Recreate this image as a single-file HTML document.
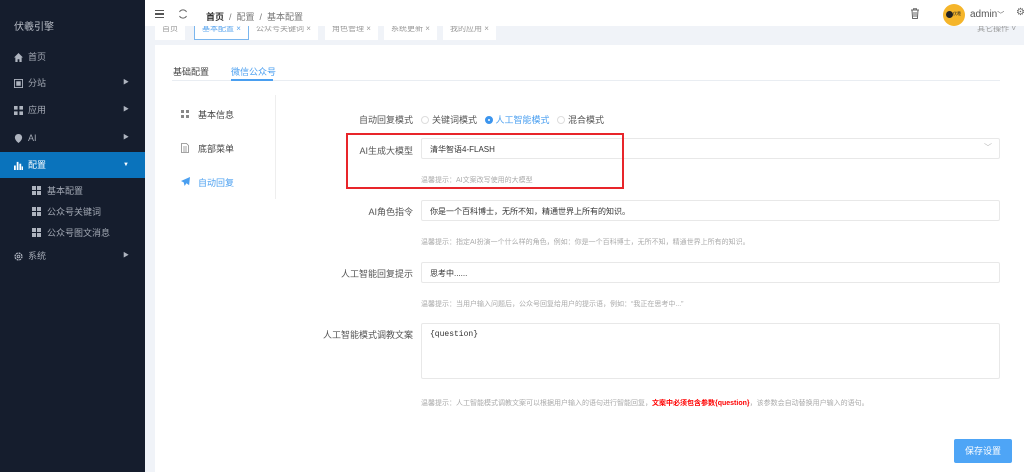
<!DOCTYPE html>
<html><head><meta charset="utf-8"><style>
*{margin:0;padding:0;box-sizing:border-box}
body{width:1024px;height:472px;overflow:hidden;position:relative;background:#fff;font-family:"Liberation Sans","Noto Sans CJK SC",sans-serif;font-size:9px;color:#555}
.abs{position:absolute}
.side{left:0;top:0;width:145px;height:472px;background:#151d2d}
.side .it{position:absolute;left:0;width:145px;height:26px;line-height:26px;color:#a4aab5;font-size:9px;padding-left:28px}
.side .ic{position:absolute;left:14px;top:9px;width:9px;height:9px}
.side .ar{position:absolute;right:16px;top:0;font-size:6px;color:#aeb4bf}
.sub{position:absolute;left:32px;color:#a4aab5;font-size:9px;padding-left:15px}
.sub:before{content:"";position:absolute;left:0;top:2px;width:9px;height:9px;background:
linear-gradient(#aeb4bf,#aeb4bf) 0 0/4px 4px no-repeat,linear-gradient(#aeb4bf,#aeb4bf) 5px 0/4px 4px no-repeat,linear-gradient(#aeb4bf,#aeb4bf) 0 5px/4px 4px no-repeat,linear-gradient(#aeb4bf,#aeb4bf) 5px 5px/4px 4px no-repeat}
.tabbar{left:145px;top:26px;width:879px;height:19px;background:#f0f3f8;overflow:hidden}
.tab{position:absolute;top:0;height:14px;background:#fff;font-size:8px;color:#999;line-height:6px;padding:0 7px;overflow:hidden}
.lbl{position:absolute;right:611px;font-size:9px;color:#555;text-align:right;white-space:nowrap}
.inp{position:absolute;left:421px;width:579px;height:21px;border:1px solid #e8e8e8;border-radius:2px;font-size:8px;color:#333;padding:6px 8px;line-height:9px}
.hint{position:absolute;left:421px;font-size:7px;color:#aaa;white-space:nowrap}
.radio{display:inline-block;width:8px;height:8px;border:1px solid #ddd;border-radius:50%;vertical-align:-1px;margin-right:3px}
</style></head><body>
<div class="abs side">
 <div class="abs" style="left:14px;top:18px;color:#b8bdc6;font-size:10px">伏羲引擎</div>
 <div class="it" style="top:44px"><svg class="ic" viewBox="0 0 10 10"><path d="M5 0L0 5h1.5v5h2.5V7h2v3h2.5V5H10z" fill="#aeb4bf"/></svg>首页</div>
 <div class="it" style="top:70px"><svg class="ic" viewBox="0 0 10 10"><rect x="0.5" y="0.5" width="9" height="9" fill="none" stroke="#aeb4bf"/><rect x="2.5" y="2.5" width="5" height="5" fill="#aeb4bf"/></svg>分站<span class="ar">▶</span></div>
 <div class="it" style="top:97px"><svg class="ic" viewBox="0 0 10 10"><rect width="4" height="4" fill="#aeb4bf"/><rect x="6" width="4" height="4" fill="#aeb4bf"/><rect y="6" width="4" height="4" fill="#aeb4bf"/><rect x="6" y="6" width="4" height="4" fill="#aeb4bf"/></svg>应用<span class="ar">▶</span></div>
 <div class="it" style="top:125px"><svg class="ic" viewBox="0 0 10 10"><path d="M5 0C2.5 0 1 2 1 4c0 3 4 6 4 6s4-3 4-6C9 2 7.5 0 5 0z" fill="#aeb4bf"/></svg>AI<span class="ar">▶</span></div>
 <div class="it" style="top:152px;background:#0a73bc;color:#fff"><svg class="ic" viewBox="0 0 10 10"><rect x="0" y="5" width="2" height="5" fill="#fff"/><rect x="3" y="1" width="2" height="9" fill="#fff"/><rect x="6" y="3" width="2" height="7" fill="#fff"/><rect x="8.5" y="6" width="1.5" height="4" fill="#fff"/></svg>配置<span class="ar" style="color:#fff">▼</span></div>
 <div class="sub" style="top:184px">基本配置</div>
 <div class="sub" style="top:205px">公众号关键词</div>
 <div class="sub" style="top:226px">公众号图文消息</div>
 <div class="it" style="top:243px"><svg class="ic" viewBox="0 0 10 10"><circle cx="5" cy="5" r="3.8" fill="none" stroke="#aeb4bf" stroke-width="1.5" stroke-dasharray="2 1"/><circle cx="5" cy="5" r="1.5" fill="none" stroke="#aeb4bf"/></svg>系统<span class="ar">▶</span></div>
</div>
<div class="abs" style="left:145px;top:0;width:879px;height:26px;background:#fff"></div>
<div class="abs" style="left:155px;top:10px;width:9px;height:8px;border-top:1.5px solid #555;border-bottom:1.5px solid #555"><div style="margin-top:2px;height:1.5px;background:#555"></div></div>
<svg class="abs" style="left:178px;top:9px" width="10" height="10" viewBox="0 0 10 10"><path d="M8.5 3A4 4 0 0 0 1.5 3M1.5 7A4 4 0 0 0 8.5 7" fill="none" stroke="#666" stroke-width="1"/></svg>
<div class="abs" style="left:206px;top:10px;font-size:9px;color:#777"><b style="color:#333">首页</b> &nbsp;/&nbsp; 配置 &nbsp;/&nbsp; 基本配置</div>
<svg class="abs" style="left:910px;top:8px" width="10" height="11" viewBox="0 0 10 11"><path d="M1 2h8M3.5 2V.8h3V2M2 2l.6 8.5h4.8L8 2M4 4v5M6 4v5" fill="none" stroke="#666"/></svg>
<div class="abs" style="left:943px;top:4px;width:22px;height:22px;border-radius:50%;background:#f5b52a"><div style="position:absolute;left:3px;top:7px;width:7px;height:7px;border-radius:50%;background:#222"></div><div style="position:absolute;left:10px;top:7px;font-size:4px;color:#222">伏羲</div></div>
<div class="abs" style="left:970px;top:9px;font-size:10px;color:#555">admin<span style="font-size:7px">﹀</span></div>
<div class="abs" style="left:1016px;top:7px;font-size:10px;color:#666">⚙</div>
<div class="abs tabbar">
 <div class="tab" style="left:10px">首页</div>
 <div class="tab" style="left:49px;border:1px solid #7ab6ee;border-top:none;color:#5aa5ee">基本配置 ×</div>
 <div class="tab" style="left:104px">公众号关键词 ×</div>
 <div class="tab" style="left:180px">角色管理 ×</div>
 <div class="tab" style="left:239px">系统更新 ×</div>
 <div class="tab" style="left:298px">我的应用 ×</div>
 <div class="abs" style="right:8px;top:0;font-size:8px;line-height:6px;color:#999">其它操作 ˅</div>
</div>
<div class="abs" style="left:155px;top:45px;width:869px;height:427px;background:#fff"></div>
<div class="abs" style="left:145px;top:45px;width:10px;height:427px;background:#f0f3f8"></div>
<div class="abs" style="left:173px;top:65px;font-size:9px;color:#444">基础配置</div>
<div class="abs" style="left:231px;top:65px;font-size:9px;color:#4a9ff0">微信公众号</div>
<div class="abs" style="left:172px;top:80px;width:828px;height:1px;background:#e9edf2"></div>
<div class="abs" style="left:231px;top:79px;width:42px;height:2px;background:#4a9ff0"></div>
<div class="abs" style="left:275px;top:95px;width:1px;height:104px;background:#eee"></div>
<svg class="abs" style="left:181px;top:110px" width="8" height="8"><rect width="3" height="3" fill="#888"/><rect x="5" width="3" height="3" fill="#888"/><rect y="5" width="3" height="3" fill="#888"/><rect x="5" y="5" width="3" height="3" fill="#888"/></svg>
<div class="abs" style="left:198px;top:108px;font-size:9px;color:#444">基本信息</div>
<svg class="abs" style="left:181px;top:143px" width="8" height="10" viewBox="0 0 8 10"><path d="M.5.5h5l2 2v7h-7zM2 4h4M2 6h4M2 8h4" fill="none" stroke="#888" stroke-width=".8"/></svg>
<div class="abs" style="left:198px;top:142px;font-size:9px;color:#444">底部菜单</div>
<svg class="abs" style="left:181px;top:177px" width="9" height="9" viewBox="0 0 10 10"><path d="M10 0L0 4.5l3 1.5 1 4 2-3 3 2z" fill="#4a9ff0"/></svg>
<div class="abs" style="left:198px;top:176px;font-size:9px;color:#4a9ff0">自动回复</div>
<div class="lbl" style="top:113px">自动回复模式</div>
<div class="abs" style="left:421px;top:113px;font-size:9px;color:#555;white-space:nowrap"><span class="radio"></span>关键词模式 &nbsp; <span class="radio" style="border:3px solid #3c95ee"></span><span style="color:#4a9ff0">人工智能模式</span> &nbsp; <span class="radio"></span>混合模式</div>
<div class="lbl" style="top:144px">AI生成大模型</div>
<div class="inp" style="top:138px">清华智语4-FLASH<span style="position:absolute;right:7px;top:4px;color:#bbb">﹀</span></div>
<div class="hint" style="top:175px">温馨提示：AI文案改写使用的大模型</div>
<div class="abs" style="left:346px;top:133px;width:278px;height:56px;border:2px solid #e8252a"></div>
<div class="lbl" style="top:205px">AI角色指令</div>
<div class="inp" style="top:200px">你是一个百科博士，无所不知，精通世界上所有的知识。</div>
<div class="hint" style="top:237px">温馨提示：指定AI扮演一个什么样的角色，例如：你是一个百科博士，无所不知，精通世界上所有的知识。</div>
<div class="lbl" style="top:267px">人工智能回复提示</div>
<div class="inp" style="top:262px">思考中......</div>
<div class="hint" style="top:299px">温馨提示：当用户输入问题后，公众号回复给用户的提示语，例如：“我正在思考中...”</div>
<div class="lbl" style="top:328px">人工智能模式调教文案</div>
<div class="inp" style="top:323px;height:56px;font-family:'Liberation Mono',monospace;font-size:8px">{question}</div>
<div class="hint" style="top:398px">温馨提示：人工智能模式调教文案可以根据用户输入的语句进行智能回复，<b style="color:#f00">文案中必须包含参数{question}</b>，该参数会自动替换用户输入的语句。</div>
<div class="abs" style="left:954px;top:439px;width:58px;height:24px;background:#4ea5f6;border-radius:2px;color:#fff;font-size:9px;text-align:center;line-height:24px">保存设置</div>
</body></html>
